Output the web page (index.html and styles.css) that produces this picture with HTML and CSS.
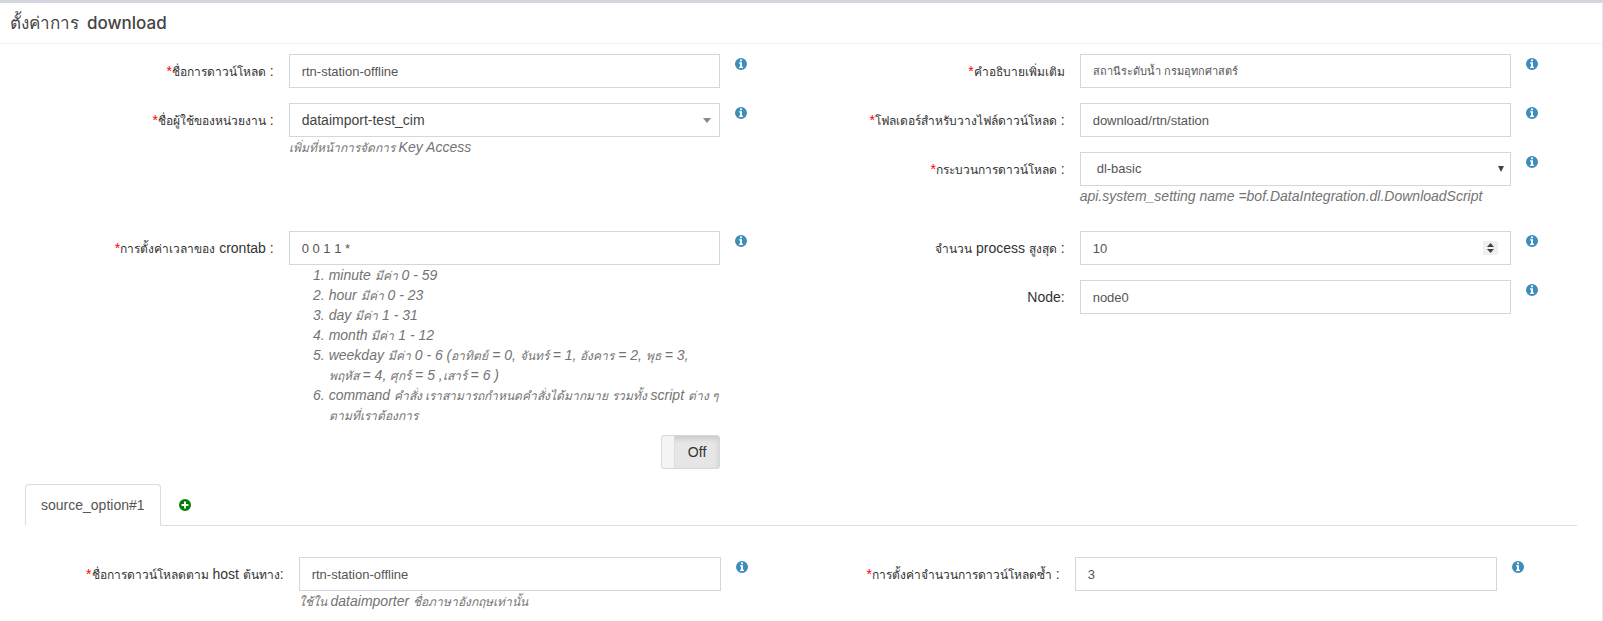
FILE: index.html
```html
<!DOCTYPE html>
<html lang="th">
<head>
<meta charset="utf-8">
<meta name="viewport" content="width=device-width, initial-scale=1">
<title>ตั้งค่าการ download</title>
<link rel="stylesheet" href="styles.css">
</head>
<body>
<svg class="sprite" aria-hidden="true">
  <symbol id="info" viewBox="0 0 12 12">
    <path fill-rule="evenodd" d="M6 0a6 6 0 1 1 0 12A6 6 0 0 1 6 0zM5 1.500v1.700h2V1.500zM4 4.200v1.200h1V8.800H4V10h4V8.800H7V4.200z"/>
  </symbol>
  <symbol id="plus" viewBox="0 0 12 12">
    <path fill-rule="evenodd" d="M6 0a6 6 0 1 1 0 12A6 6 0 0 1 6 0zM5 2.500V5H2.500v2H5v2.500h2V7h2.500V5H7V2.500z"/>
  </symbol>
</svg>
<main class="box">
  <header class="box-header"><h1 class="box-title">ตั้งค่าการ <span class="box-title-latin">download</span></h1></header>
  <form class="box-body">
    <div class="row">
      <div class="column">
        <div class="group">
          <label class="label" for="name"><span class="required">*</span><span class="th">ชื่อการดาวน์โหลด</span> :</label>
          <div class="field"><input class="control" id="name" type="text" value="rtn-station-offline"></div>
          <svg class="icon"><use href="#info"/></svg>
        </div>
        <div class="group">
          <label class="label" for="user"><span class="required">*</span><span class="th">ชื่อผู้ใช้ของหน่วยงาน</span> :</label>
          <div class="field">
            <select class="control select-search" id="user"><option>dataimport-test_cim</option></select>
            <p class="help"><span class="th">เพิ่มที่หน้าการจัดการ</span> Key Access</p>
          </div>
          <svg class="icon"><use href="#info"/></svg>
        </div>
      </div>
      <div class="column">
        <div class="group">
          <label class="label" for="description"><span class="required">*</span><span class="th">คำอธิบายเพิ่มเติม</span></label>
          <div class="field"><input class="control control-th" id="description" type="text" value="สถานีระดับน้ำ กรมอุทกศาสตร์"></div>
          <svg class="icon"><use href="#info"/></svg>
        </div>
        <div class="group">
          <label class="label" for="folder"><span class="required">*</span><span class="th">โฟลเดอร์สำหรับวางไฟล์ดาวน์โหลด</span> :</label>
          <div class="field"><input class="control" id="folder" type="text" value="download/rtn/station"></div>
          <svg class="icon"><use href="#info"/></svg>
        </div>
        <div class="group">
          <label class="label" for="process"><span class="required">*</span><span class="th">กระบวนการดาวน์โหลด</span> :</label>
          <div class="field">
            <select class="control select-plain" id="process"><option>dl-basic</option></select>
            <p class="help">api.system_setting name =bof.DataIntegration.dl.DownloadScript</p>
          </div>
          <svg class="icon"><use href="#info"/></svg>
        </div>
      </div>
    </div>
    <div class="row">
      <div class="column">
        <div class="group">
          <label class="label" for="crontab"><span class="required">*</span><span class="th">การตั้งค่าเวลาของ</span> crontab :</label>
          <div class="field">
            <input class="control" id="crontab" type="text" value="0 0 1 1 *">
            <ol class="help help-list">
              <li>minute <span class="th">มีค่า</span> 0 - 59</li>
              <li>hour <span class="th">มีค่า</span> 0 - 23</li>
              <li>day <span class="th">มีค่า</span> 1 - 31</li>
              <li>month <span class="th">มีค่า</span> 1 - 12</li>
              <li>weekday <span class="th">มีค่า</span> 0 - 6 (<span class="th">อาทิตย์</span> = 0, <span class="th">จันทร์</span> = 1, <span class="th">อังคาร</span> = 2, <span class="th">พุธ</span> = 3,<br><span class="th">พฤหัส</span> = 4, <span class="th">ศุกร์</span> = 5 ,<span class="th">เสาร์</span> = 6 )</li>
              <li>command <span class="th">คำสั่ง เราสามารถกำหนดคำสั่งได้มากมาย รวมทั้ง</span> script <span class="th">ต่าง ๆ<br>ตามที่เราต้องการ</span></li>
            </ol>
            <div class="toggle-line">
              <label class="toggle"><input class="toggle-input" type="checkbox"><span class="toggle-handle"></span><span class="toggle-text">Off</span></label>
            </div>
          </div>
          <svg class="icon"><use href="#info"/></svg>
        </div>
      </div>
      <div class="column">
        <div class="group">
          <label class="label" for="max"><span class="th">จำนวน</span> process <span class="th">สูงสุด</span> :</label>
          <div class="field"><input class="control" id="max" type="number" value="10"></div>
          <svg class="icon"><use href="#info"/></svg>
        </div>
        <div class="group">
          <label class="label" for="node">Node:</label>
          <div class="field"><input class="control" id="node" type="text" value="node0"></div>
          <svg class="icon"><use href="#info"/></svg>
        </div>
      </div>
    </div>
    <section class="sources">
      <nav class="tabs">
        <a class="tab tab-active" href="#source-1">source_option#1</a>
        <button class="tab tab-add" type="button" aria-label="เพิ่ม"><svg class="plus-icon"><use href="#plus"/></svg></button>
      </nav>
      <div class="row panel" id="source-1">
        <div class="column">
          <div class="group">
            <label class="label" for="host-name"><span class="required">*</span><span class="th">ชื่อการดาวน์โหลดตาม</span> host <span class="th">ต้นทาง</span>:</label>
            <div class="field">
              <input class="control" id="host-name" type="text" value="rtn-station-offline">
              <p class="help"><span class="th">ใช้ใน</span> dataimporter <span class="th">ชื่อภาษาอังกฤษเท่านั้น</span></p>
            </div>
            <svg class="icon"><use href="#info"/></svg>
          </div>
        </div>
        <div class="column">
          <div class="group">
            <label class="label" for="retry"><span class="required">*</span><span class="th">การตั้งค่าจำนวนการดาวน์โหลดซ้ำ</span> :</label>
            <div class="field"><input class="control" id="retry" type="text" value="3"></div>
            <svg class="icon"><use href="#info"/></svg>
          </div>
        </div>
      </div>
    </section>
  </form>
</main>
</body>
</html>
```

FILE: styles.css
```css
* { box-sizing: border-box; }

body {
  margin: 0;
  background: #fff;
  color: #333;
  font: 14px/20px "Liberation Sans", "Noto Sans", sans-serif;
}

.sprite { display: none; }

.box {
  border-top: 3px solid #d2d6de;
  border-right: 1px solid #e6e7ec;
}

.box-header {
  padding: 10px;
  border-bottom: 1px solid #f4f4f4;
}

.box-title {
  display: flex;
  align-items: baseline;
  gap: 8px;
  margin: 0;
  color: #444;
  font: 500 17px/20px "Noto Sans", sans-serif;
}

.box-title-latin { font: 500 17px/20px Inter, sans-serif; }

.box-body { padding: 10px 10px 0; }

.row { display: grid; grid-template-columns: 1fr 1fr; }

.row + .row { margin-top: 10px; }

.group {
  display: grid;
  grid-template-columns: 4fr 7fr 1fr;
  margin-bottom: 15px;
}

.label {
  padding-top: 7px;
  text-align: right;
  white-space: nowrap;
}

.required { color: red; }

.th { font-size: 12px; line-height: 1; }

.field { min-width: 0; padding: 0 15px; }

.control {
  display: block;
  width: 100%;
  height: 34px;
  padding: 6px 12px;
  border: 1px solid #d2d6de;
  border-radius: 0;
  background: #fff;
  color: #555;
  font: inherit;
  font-size: 13px;
  appearance: none;
}

.control-th { font-size: 11px; }

.control::-webkit-inner-spin-button {
  width: 15px;
  height: 14px;
  margin: 0;
  opacity: 1;
  appearance: none;
  background: #f0f0f0 url("data:image/svg+xml,%3Csvg xmlns='http://www.w3.org/2000/svg' width='15' height='14'%3E%3Cpath d='M4 6h7L7.500 2zM4 8h7L7.500 12z' fill='%23444'/%3E%3C/svg%3E") no-repeat center;
}

.select-search {
  color: #444;
  font-size: 14px;
  background: #fff url("data:image/svg+xml,%3Csvg xmlns='http://www.w3.org/2000/svg' width='8' height='5'%3E%3Cpath d='M0 0h8L4 5z' fill='%23888'/%3E%3C/svg%3E") no-repeat right 8px center;
}

.select-plain {
  padding-left: 16px;
  background: #fff url("data:image/svg+xml,%3Csvg xmlns='http://www.w3.org/2000/svg' width='6' height='6'%3E%3Cpath d='M0 0h6L3 6z' fill='%23444'/%3E%3C/svg%3E") no-repeat right 6px center;
}

.help {
  margin: 0;
  color: #737373;
  font-style: italic;
  white-space: nowrap;
}

.help-list { padding-left: 40px; }

.icon {
  width: 12px;
  height: 12px;
  margin-top: 4px;
  fill: #3c8dbc;
}

.toggle-line {
  display: flex;
  justify-content: flex-end;
  margin-top: 10px;
}

.toggle {
  position: relative;
  display: flex;
  width: 59px;
  height: 34px;
  border: 1px solid #d8d8d8;
  border-radius: 3px;
  background: #e6e6e6;
  box-shadow: inset 0 3px 5px rgba(0, 0, 0, 0.125);
  overflow: hidden;
}

.toggle-input {
  position: absolute;
  inset: 0;
  margin: 0;
  opacity: 0;
}

.toggle-handle {
  width: 13px;
  border-right: 1px solid #ddd;
  background: #f4f4f4;
}

.toggle-text {
  flex: 1;
  line-height: 32px;
  text-align: center;
}

.sources { padding: 0 15px; }

.tabs { display: flex; border-bottom: 1px solid #ddd; }

.tab {
  padding: 10px 15px;
  border: 1px solid transparent;
  border-radius: 4px 4px 0 0;
  background: none;
  color: #555;
  font: inherit;
  text-decoration: none;
}

.tab-active {
  margin-bottom: -1px;
  border-color: #ddd;
  border-bottom-color: #fff;
  background: #fff;
}

.tab-add { margin-left: 2px; }

.plus-icon {
  display: block;
  width: 12px;
  height: 12px;
  fill: green;
}

.panel { padding-top: 31px; }
```
